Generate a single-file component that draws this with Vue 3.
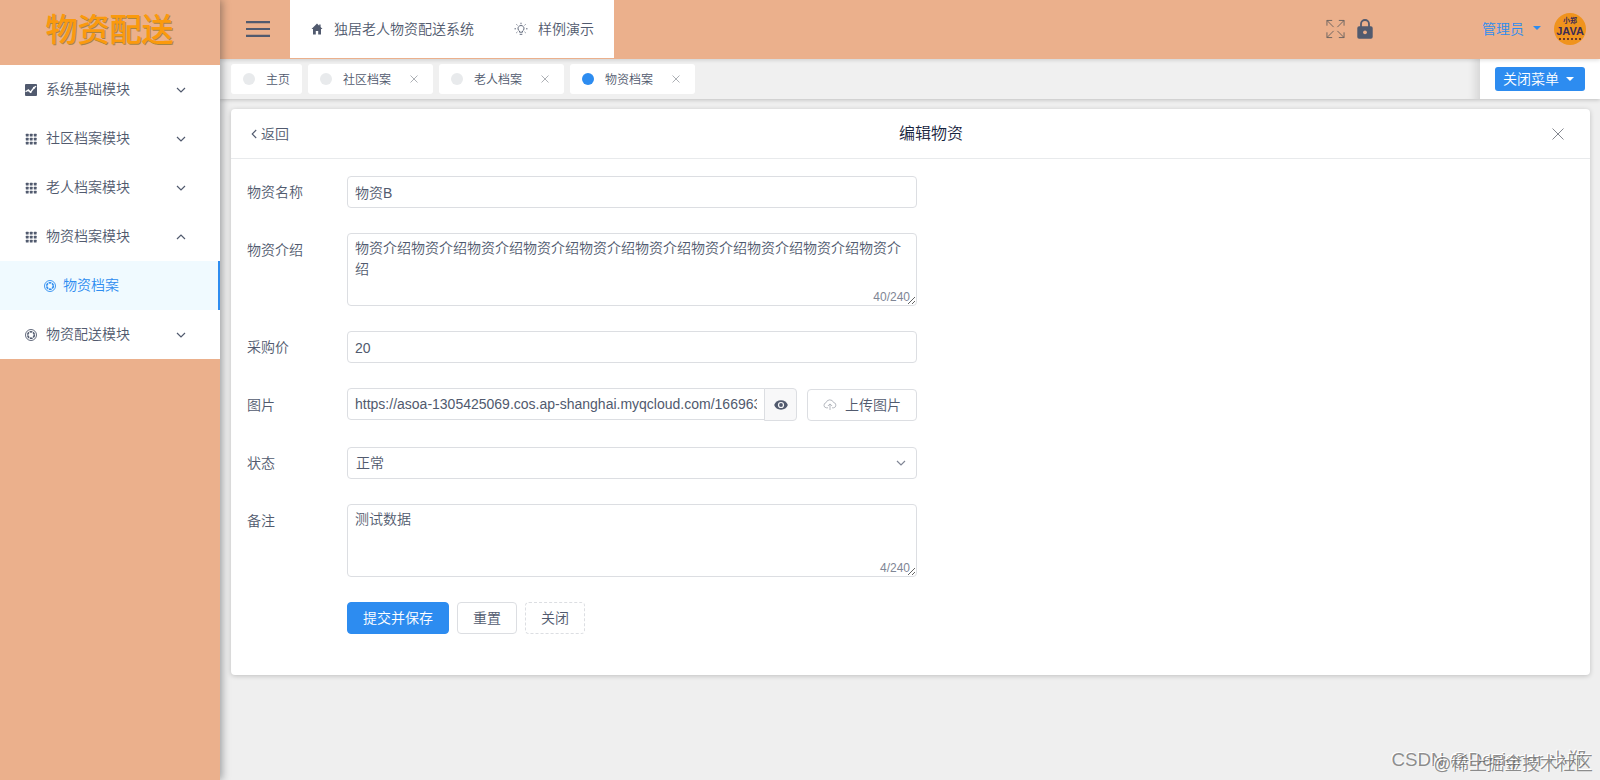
<template>
  <div class="layout">
    <aside class="sider">
      <div class="logo"><span>物资配送</span></div>
      <ul class="side-menu">
        <template v-for="item in menus" :key="item.name">
          <li class="side-item" @click="item.open = !item.open">
            <svg v-if="item.icon === 'image'" class="side-icon" viewBox="0 0 12 12">
              <rect width="12" height="12" rx="1" fill="#515a6e" />
              <path d="M.5 7.6l3-1.6 2 2.2 3.4-4.4 2.2-1.6" fill="none" stroke="#fff" stroke-width="1.3" />
              <circle cx="3.3" cy="6.4" r="1" fill="#fff" />
              <circle cx="5.6" cy="8" r="1" fill="#fff" />
              <circle cx="9" cy="3.8" r="1.1" fill="#fff" />
            </svg>
            <svg v-else-if="item.icon === 'keypad'" class="side-icon" viewBox="0 0 12 12">
              <template v-for="r in 3" :key="r">
                <rect
                  v-for="c in 3"
                  :key="c"
                  :x="c * 4 - 3.2"
                  :y="r * 4 - 3.2"
                  width="2.8"
                  height="2.8"
                  rx="0.5"
                  fill="#515a6e"
                />
              </template>
            </svg>
            <svg v-else class="side-icon" viewBox="0 0 12 12" fill="none" stroke="currentColor">
              <circle cx="6" cy="6" r="5.5" stroke-width="0.9" />
              <circle cx="6" cy="6" r="3.3" stroke-width="1.6" stroke-dasharray="2.7 0.75" />
            </svg>
            <span class="side-name">{{ item.name }}</span>
            <svg class="arrow" :class="{ up: item.open }" viewBox="0 0 10 10">
              <path d="M1 3l4 4 4-4" fill="none" stroke="#515a6e" stroke-width="1.2" />
            </svg>
          </li>
          <li v-if="item.open" class="side-child">
            <svg class="side-icon" viewBox="0 0 12 12" fill="none" stroke="currentColor">
              <circle cx="6" cy="6" r="5.5" stroke-width="0.9" />
              <circle cx="6" cy="6" r="3.3" stroke-width="1.6" stroke-dasharray="2.7 0.75" />
            </svg>
            <span>物资档案</span>
          </li>
        </template>
      </ul>
    </aside>

    <div class="main">
      <header class="header">
        <div class="burger">
          <svg viewBox="0 0 24 16" width="24" height="16" stroke="#515a6e" stroke-width="2.2">
            <path d="M0 1.2h24M0 8h24M0 14.8h24" />
          </svg>
        </div>
        <nav class="top-nav">
          <a class="nav-home">
            <svg viewBox="0 0 12 12" width="12" height="12">
              <path d="M6 .6L.5 6H2v5.4h2.8V8h2.4v3.4H10V6h1.5L9.6 4.1V1.5H8.2v1.2z" fill="#515a6e" />
            </svg>
            <span>独居老人物资配送系统</span>
          </a>
          <a class="nav-demo">
            <svg viewBox="0 0 14 14" width="14" height="14" fill="none" stroke="#515a6e" stroke-width="0.9">
              <path d="M5.5 10.2V9.1a3 3 0 1 1 3 0v1.1zM5.7 12.3h2.6M7 .7v1.5M.5 6.8H2M12 6.8h1.5M2.5 2.4l1 1M11.5 2.4l-1 1M2.4 10.8l1-.9M11.6 10.8l-1-.9" />
            </svg>
            <span>样例演示</span>
          </a>
        </nav>
        <div class="header-right">
          <svg class="full" viewBox="0 0 20 20" fill="none" stroke="#6b6460" stroke-width="1">
            <path d="M1 6.5V1h5.5M1 1l7 7M13.5 1H19v5.5M19 1l-7 7M1 13.5V19h5.5M1 19l7-7M13.5 19H19v-5.5M19 19l-7-7" />
          </svg>
          <svg class="lock" viewBox="0 0 16 20">
            <path d="M4 8V5a4 4 0 0 1 8 0v3" fill="none" stroke="#515a6e" stroke-width="1.8" />
            <rect x="0.3" y="7.3" width="15.4" height="12.4" rx="1.8" fill="#515a6e" />
            <circle cx="8" cy="13.3" r="1.9" fill="#ebb08c" />
          </svg>
          <span class="user">管理员</span>
          <i class="caret"></i>
          <div class="avatar">
            <small class="avatar-top">小郑</small>
            <b>JAVA</b>
            <small class="avatar-line"></small>
          </div>
        </div>
      </header>

      <div class="tabs-bar">
        <div class="tabs">
          <div v-for="tab in tabs" :key="tab.name" class="tab" :class="{ active: tab.active }">
            <i class="dot"></i>
            <span>{{ tab.name }}</span>
            <svg v-if="tab.closable" class="tab-close" viewBox="0 0 8 8">
              <path d="M.5.5l7 7M7.5.5l-7 7" stroke="#a5a8ae" stroke-width="0.9" />
            </svg>
          </div>
        </div>
        <div class="close-menu">
          <button class="close-menu-btn"><span>关闭菜单</span><i class="caret"></i></button>
        </div>
      </div>

      <section class="card">
        <div class="card-head">
          <a class="back">
            <svg viewBox="0 0 6 10" width="6" height="10">
              <path d="M5.2 1L1.2 5l4 4" fill="none" stroke="#515a6e" stroke-width="1.1" />
            </svg>
            <span>返回</span>
          </a>
          <h1>编辑物资</h1>
          <svg class="card-close" viewBox="0 0 12 12">
            <path d="M.5.5l11 11M11.5.5l-11 11" stroke="#84878f" stroke-width="1" />
          </svg>
        </div>

        <form class="form" @submit.prevent>
          <div class="row">
            <label>物资名称</label>
            <input v-model="form.name" type="text" class="input" />
          </div>
          <div class="row area-row">
            <label>物资介绍</label>
            <div class="area">
              <textarea v-model="form.content" maxlength="240"></textarea>
              <span class="count">{{ form.content.length }}/240</span>
            </div>
          </div>
          <div class="row">
            <label>采购价</label>
            <input v-model="form.price" type="text" class="input price-input" />
          </div>
          <div class="row image-row">
            <label>图片</label>
            <div class="image-field">
              <input v-model="form.image" type="text" class="input url" />
              <button type="button" class="eye">
                <svg viewBox="0 0 14 10" width="14" height="10">
                  <path d="M7 .3C3.7.3 1.2 2.2.2 5c1 2.8 3.5 4.7 6.8 4.7S12.8 7.8 13.8 5C12.8 2.2 10.3.3 7 .3z" fill="#515a6e" />
                  <circle cx="7" cy="5" r="3.1" fill="#f8f8f9" />
                  <circle cx="7" cy="5" r="1.9" fill="#515a6e" />
                </svg>
              </button>
              <button type="button" class="btn upload">
                <svg viewBox="0 0 14 12" width="14" height="12" fill="none" stroke="#a3a7b0" stroke-width="0.8">
                  <path d="M5 8.8H3.2A2.6 2.6 0 0 1 3 3.7 4 4 0 0 1 10.6 3.5 2.7 2.7 0 0 1 10.8 8.8H9M7 11V5M4.9 7L7 4.9 9.1 7" />
                </svg>
                <span>上传图片</span>
              </button>
            </div>
          </div>
          <div class="row">
            <label>状态</label>
            <div class="input select">
              <span>{{ form.status }}</span>
              <svg viewBox="0 0 10 10" width="10" height="10">
                <path d="M1 3l4 4 4-4" fill="none" stroke="#808695" stroke-width="1.2" />
              </svg>
            </div>
          </div>
          <div class="row area-row">
            <label>备注</label>
            <div class="area">
              <textarea v-model="form.remark" maxlength="240"></textarea>
              <span class="count">{{ form.remark.length }}/240</span>
            </div>
          </div>
          <div class="actions">
            <button type="button" class="btn primary"><span>提交并保存</span></button>
            <button type="button" class="btn"><span>重置</span></button>
            <button type="button" class="btn dashed"><span>关闭</span></button>
          </div>
        </form>
      </section>
    </div>

    <div class="mark mark-csdn">CSDN @Designer 小郑</div>
    <div class="mark mark-juejin">@稀土掘金技术社区</div>
  </div>
</template>

<script setup>
import { reactive, ref } from 'vue'

const menus = ref([
  { name: '系统基础模块', icon: 'image', open: false },
  { name: '社区档案模块', icon: 'keypad', open: false },
  { name: '老人档案模块', icon: 'keypad', open: false },
  { name: '物资档案模块', icon: 'keypad', open: true },
  { name: '物资配送模块', icon: 'aperture', open: false }
])

const tabs = [
  { name: '主页' },
  { name: '社区档案', closable: true },
  { name: '老人档案', closable: true },
  { name: '物资档案', closable: true, active: true }
]

const form = reactive({
  name: '物资B',
  content: '物资介绍'.repeat(10),
  price: '20',
  image: 'https://asoa-1305425069.cos.ap-shanghai.myqcloud.com/166963',
  status: '正常',
  remark: '测试数据'
})
</script>

<style>
body {
  margin: 0;
  overflow: hidden;
}
</style>

<style scoped>
.layout {
  position: relative;
  display: flex;
  width: 1600px;
  height: 780px;
  overflow: hidden;
  background: #efefef;
  color: #515a6e;
  font-family: "Liberation Sans", "Noto Sans CJK SC", sans-serif;
  font-size: 14px;
  font-weight: 350;
}

.layout * {
  box-sizing: border-box;
}

svg {
  display: block;
  flex: none;
}

button,
input,
textarea {
  font: inherit;
  color: inherit;
  outline: none;
}

.sider {
  position: relative;
  z-index: 3;
  width: 220px;
  flex: none;
  background: #ebb08c;
  box-shadow: 2px 0 8px rgba(29, 35, 41, 0.4);
}

.logo {
  height: 65px;
  display: flex;
  justify-content: center;
  padding: 6px 1px 0 0;
  color: #fb9a0c;
  font-size: 32px;
  line-height: 48px;
  font-weight: 500;
  text-shadow: 1px 1px 0 #a98443;
}

.side-menu {
  list-style: none;
  margin: 0;
  padding: 0;
  background: #fff;
}

.side-item,
.side-child {
  height: 49px;
  display: flex;
  align-items: center;
  padding-left: 25px;
  cursor: pointer;
}

/* CJK glyphs sit low in their line box next to the icons */
.tab span,
.nav-home span,
.nav-demo span,
.back span,
.select span,
.close-menu-btn span,
.btn span {
  padding-bottom: 2px;
}

.side-item span,
.side-child span {
  padding-bottom: 4px;
}

.side-icon {
  width: 12px;
  height: 12px;
  margin-right: 9px;
}

.side-name {
  width: 130px;
}

.arrow {
  width: 10px;
  height: 10px;
}

.arrow.up {
  transform: rotate(180deg);
}

.side-child {
  padding-left: 44px;
  color: #2d8cf0;
  background: #f0faff;
  border-right: 2px solid #2d8cf0;
}

.side-child .side-icon {
  margin-right: 7px;
}

.main {
  flex: 1;
  min-width: 0;
}

.header {
  position: relative;
  z-index: 2;
  height: 59px;
  display: flex;
  background: #ebb08c;
  box-shadow: 0 1px 4px rgba(0, 0, 0, 0.15);
}

.burger {
  width: 70px;
  padding: 21px 0 0 26px;
}

.top-nav {
  width: 324px;
  height: 58px;
  display: flex;
  align-items: center;
  background: #fff;
}

.top-nav a {
  display: flex;
  align-items: center;
}

.nav-home {
  padding-left: 21px;
  gap: 11px;
}

.nav-demo {
  padding-left: 40px;
  gap: 10px;
}

.header-right {
  height: 57px;
  margin-left: auto;
  display: flex;
  align-items: center;
  padding-right: 14px;
}

.full {
  width: 19px;
  height: 20px;
  margin-right: 12px;
}

.lock {
  width: 16px;
  height: 20px;
  margin-right: 109px;
}

.user {
  padding-bottom: 2px;
  color: #2d8cf0;
}

.caret {
  border: 4px solid transparent;
  border-top-color: currentColor;
  border-bottom: 0;
}

.header-right .caret {
  margin: 0 13px 2px 9px;
  color: #2d8cf0;
}

.avatar {
  width: 32px;
  height: 32px;
  display: flex;
  flex-direction: column;
  align-items: center;
  border-radius: 50%;
  background: #f0931d;
  color: #3b2b56;
}

.avatar small {
  font-size: 7px;
  line-height: 9px;
  font-weight: 700;
  margin-top: 3px;
}

.avatar b {
  font-size: 11px;
  line-height: 12px;
  font-weight: 700;
}

.avatar .avatar-line {
  width: 22px;
  margin-top: 1px;
  border-top: 2px dotted #6b3a2c;
}

.tabs-bar {
  height: 40px;
  display: flex;
  background: #f0f0f0;
  box-shadow: 0 1px 4px rgba(0, 0, 0, 0.2);
}

.tabs {
  flex: 1;
  display: flex;
  gap: 6px;
  padding: 5px 0 0 11px;
  box-shadow: inset -12px 0 10px -8px rgba(0, 0, 0, 0.12);
}

.tab {
  height: 30px;
  display: flex;
  align-items: center;
  padding: 0 12px;
  border-radius: 3px;
  background: #fff;
  font-size: 12px;
}

.dot {
  width: 12px;
  height: 12px;
  margin-right: 11px;
  border-radius: 50%;
  background: #e8eaec;
}

.active .dot {
  background: #2d8cf0;
}

.tab-close {
  width: 8px;
  height: 8px;
  margin: 0 3px 0 19px;
}

.close-menu {
  width: 120px;
  padding: 8px 15px;
  background: #fff;
}

.close-menu-btn {
  width: 90px;
  height: 24px;
  display: flex;
  align-items: center;
  gap: 7px;
  padding: 0 0 0 8px;
  border: 0;
  border-radius: 3px;
  background: #2d8cf0;
  color: #fff;
}

.card {
  width: 1359px;
  height: 566px;
  margin: 10px 0 0 11px;
  border-radius: 4px;
  background: #fff;
  box-shadow: 0 1px 5px rgba(0, 0, 0, 0.2);
}

.card-head {
  height: 50px;
  display: grid;
  grid-template-columns: 1fr auto 1fr;
  align-items: center;
  padding: 0 26px 0 20px;
  border-bottom: 1px solid #e8eaec;
}

.back {
  display: flex;
  align-items: center;
  gap: 4px;
}

.card-head h1 {
  margin: 0 0 0 47px;
  color: #17233d;
  font-size: 16px;
  line-height: 24px;
  font-weight: 350;
}

.card-close {
  width: 12px;
  height: 12px;
  justify-self: end;
}

.form {
  padding: 17px 0 0 16px;
}

.row {
  display: flex;
  height: 33px;
  margin-bottom: 24px;
}

.row label {
  width: 100px;
  flex: none;
  line-height: 33px;
}

.area-row {
  height: 74px;
}

.area-row label,
.image-row label {
  line-height: 35px;
}

.image-row {
  height: 35px;
}

.input {
  width: 570px;
  height: 32px;
  padding: 0 7px;
  border: 1px solid #dcdee2;
  border-radius: 4px;
  background: #fff;
}

.price-input {
  padding-top: 1px;
}

.area {
  position: relative;
  width: 570px;
  height: 73px;
}

.area textarea {
  display: block;
  width: 100%;
  height: 100%;
  padding: 4px 7px;
  border: 1px solid #dcdee2;
  border-radius: 4px;
  line-height: 21px;
  resize: vertical;
  overflow: hidden;
}

.count {
  position: absolute;
  right: 7px;
  bottom: 2px;
  color: #808695;
  font-size: 12px;
  line-height: 14px;
}

.image-field {
  display: flex;
}

.url {
  width: 418px;
  border-radius: 4px 0 0 4px;
}

.eye {
  width: 33px;
  height: 33px;
  margin-left: -1px;
  padding: 0 0 0 9px;
  border: 1px solid #dcdee2;
  border-radius: 0 4px 4px 0;
  background: #f8f8f9;
}

.btn {
  height: 32px;
  display: flex;
  align-items: center;
  padding: 0 15px;
  border: 1px solid #dcdee2;
  border-radius: 4px;
  background: #fff;
}

.upload {
  width: 110px;
  margin: 1px 0 0 10px;
  gap: 8px;
}

.select {
  display: flex;
  align-items: center;
  justify-content: space-between;
  padding: 0 10px 0 8px;
}

.actions {
  display: flex;
  gap: 8px;
  padding-left: 100px;
}

.primary {
  background: #2d8cf0;
  border-color: #2d8cf0;
  color: #fff;
}

.dashed {
  border-style: dashed;
}

.mark {
  position: absolute;
  z-index: 5;
  white-space: nowrap;
  color: rgba(80, 80, 80, 0.65);
  text-shadow: -1px -1px 0 #fff;
}

.mark-csdn {
  right: 14px;
  bottom: 8px;
  font-size: 18.7px;
  line-height: 24px;
}

.mark-juejin {
  right: 7px;
  bottom: 4px;
  font-size: 17.7px;
  line-height: 24px;
}
</style>
